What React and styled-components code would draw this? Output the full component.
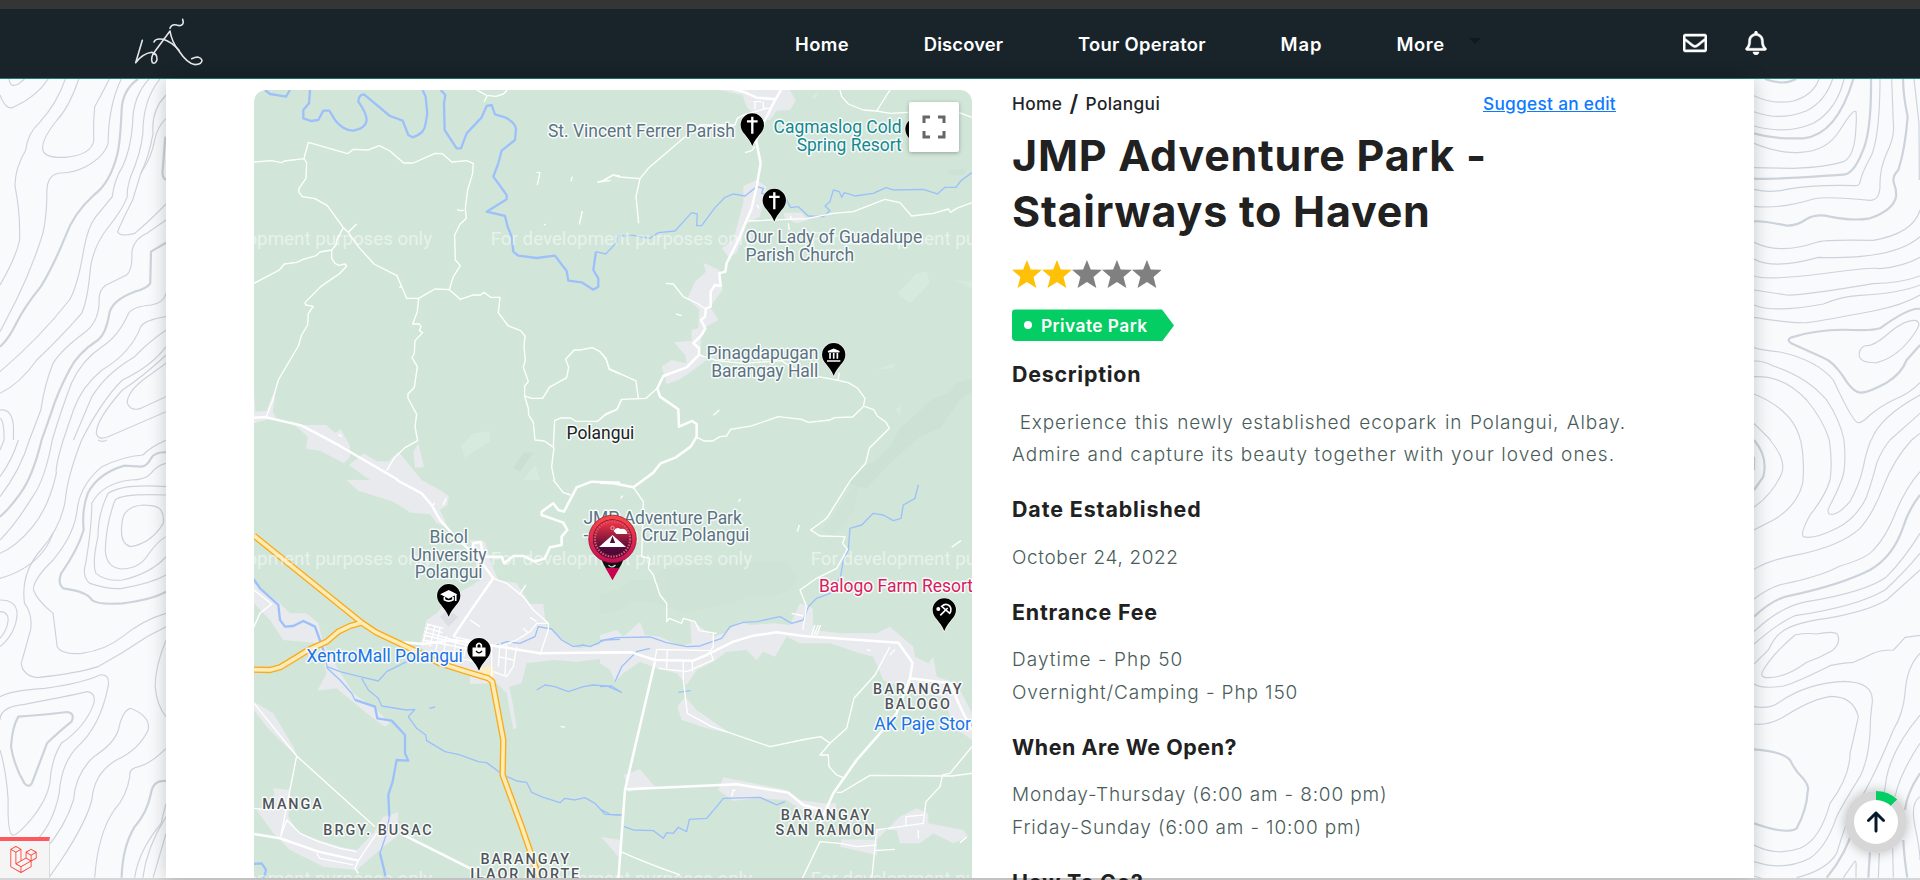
import React from 'react';
import styled, { createGlobalStyle } from 'styled-components';
import { FaRegEnvelope, FaRegBell } from 'react-icons/fa';
import { FaArrowUp } from 'react-icons/fa6';
import { SiLaravel } from 'react-icons/si';

const GlobalStyle = createGlobalStyle`
  * { box-sizing: border-box; }
  body { margin: 0; overflow: hidden; font-family: Inter, "Liberation Sans", sans-serif; }
  h1, h2, p { margin: 0; }
`;

const Page = styled.div`
  display: flex;
  flex-direction: column;
  height: 880px;
  overflow: hidden;
  background: #f9fafc;
`;

const TopStrip = styled.div`
  height: 9px;
  flex: none;
  background: #353535;
`;

const Header = styled.header`
  display: flex;
  align-items: center;
  height: 70px;
  flex: none;
  padding-left: 130px;
  background: #18242a;
  border-bottom: 1px solid #1c7f79;
`;

const Logo = styled.svg`
  width: 76px;
  height: 60px;
  margin-top: -3px;
  fill: none;
  stroke: #e4e6e7;
  stroke-width: 4.8;
  stroke-linecap: round;
  stroke-linejoin: round;
`;

const Nav = styled.nav`
  display: flex;
  gap: 75px;
  margin-left: 589px;
`;

const NavLink = styled.a`
  color: #fff;
  font-size: 18.4px;
  font-weight: 600;
  line-height: 26px;
  letter-spacing: ${(p) => p.$track}px;
  margin-right: -${(p) => p.$track}px;
  white-space: nowrap;
`;

const Caret = styled.span`
  width: 0;
  height: 0;
  margin: -5px 0 0 25px;
  border: 6px solid transparent;
  border-top-color: #10181b;
  border-bottom: 0;
`;

const HeaderIcons = styled.div`
  display: flex;
  align-items: center;
  gap: 37px;
  margin: -2px 0 0 auto;
  padding-right: 152px;
  color: #fff;
  path { stroke: #fff; stroke-width: 10; }
`;

const Main = styled.main`
  display: grid;
  grid-template-columns: 166px 1588px 166px;
  height: 799px;
  flex: none;
`;

const Contours = styled.svg`
  width: 166px;
  height: 799px;
  fill: none;
  stroke: #ccd3db;
  stroke-width: 1.15;
  path { vector-effect: non-scaling-stroke; }
  .index { stroke-width: 2.2; }
`;

const Panel = styled.section`
  position: relative;
  z-index: 1;
  display: flex;
  gap: 40px;
  height: 799px;
  padding: 11px 0 0 88px;
  background: #fff;
  box-shadow: 0 0 18px rgba(0, 0, 0, 0.2);
`;

const MapFrame = styled.div`
  position: relative;
  width: 718px;
  height: 788px;
  flex: none;
  overflow: hidden;
  border-radius: 12px 12px 0 0;
  background: #d1e6d9;
`;

const MapArt = styled.svg`
  display: block;
  width: 718px;
  height: 788px;
  .road { fill: none; stroke: #fff; stroke-width: 4; stroke-linejoin: round; }
  .main { fill: none; stroke: #fff; stroke-width: 7.5; stroke-linejoin: round; }
  .river { fill: none; stroke: #9dc0fa; stroke-width: 4; stroke-linejoin: round; }
  .wide { stroke-width: 7; }
  .urban { fill: #e8eaed; }
  .shade { fill: #cbe0d2; }
  .light { fill: #d6ebde; }
  .edge { fill: none; stroke: #f9ab1a; stroke-width: 19; stroke-linejoin: round; }
  .core { fill: none; stroke: #ffebb5; stroke-width: 11; stroke-linejoin: round; }
`;

const MapLabel = styled.text`
  font-family: Roboto, sans-serif;
  font-size: ${(p) => (p.$area ? 14.4 : 17.45)}px;
  font-weight: ${(p) => (p.$area ? 500 : 400)};
  letter-spacing: ${(p) => (p.$area ? 1.95 : 0)}px;
  fill: ${(p) => p.$color || '#5b7383'};
  stroke: rgba(255, 255, 255, 0.85);
  stroke-width: 3px;
  stroke-linejoin: round;
  paint-order: stroke;
`;

const Watermark = styled.text`
  font-family: Roboto, sans-serif;
  font-size: 18.75px;
  fill: rgba(255, 255, 255, 0.5);
`;

const FullscreenButton = styled.button`
  position: absolute;
  top: 12px;
  right: 13px;
  display: grid;
  place-items: center;
  width: 50px;
  height: 50px;
  padding: 0;
  border: 0;
  border-radius: 2px;
  background: #fff;
  box-shadow: 0 1px 4px rgba(0, 0, 0, 0.3);
`;

const Details = styled.article`
  width: 614px;
  padding-top: 2px;
`;

const CrumbRow = styled.div`
  display: flex;
  align-items: center;
  width: 604px;
  height: 24px;
  margin-bottom: 11.3px;
  color: #212529;
  font-size: 17.3px;
  font-weight: 500;
  line-height: 24px;
  letter-spacing: 0.4px;
`;

const Slash = styled.span`
  margin: 0 6.8px 0 7.2px;
  font-size: 23px;
  font-weight: 600;
`;

const SuggestLink = styled.a`
  margin-left: auto;
  color: #0d7bff;
  text-decoration: underline;
  letter-spacing: 0.28px;
`;

const Title = styled.h1`
  color: #212121;
  font-size: 43px;
  font-weight: 700;
  line-height: 56px;
  letter-spacing: 0.75px;
  white-space: nowrap;
`;

const Stars = styled.div`
  display: flex;
  margin: 21.2px 0 21px;
`;

const Star = styled.svg`
  width: 29.9px;
  height: 28px;
  fill: ${(p) => (p.$on ? '#ffc107' : '#808080')};
`;

const Badge = styled.span`
  display: flex;
  align-items: center;
  gap: 9px;
  width: 162px;
  height: 32px;
  padding-left: 12px;
  border-radius: 4px 0 0 4px;
  background: #04cd63;
  color: #fff;
  font-size: 17.3px;
  font-weight: 600;
  letter-spacing: 0.46px;
  white-space: nowrap;
  clip-path: polygon(0 0, 150px 0, 100% 50%, 150px 100%, 0 100%);
  &::before {
    content: '';
    width: 8px;
    height: 8px;
    border-radius: 50%;
    background: #fff;
  }
`;

const Sections = styled.div`
  display: flex;
  flex-direction: column;
  gap: 23.6px;
  margin-top: 18.7px;
`;

const Heading = styled.h2`
  margin-bottom: 18.6px;
  color: #212121;
  font-size: 21.4px;
  font-weight: 650;
  line-height: 28px;
  letter-spacing: ${(p) => p.$track}px;
  white-space: nowrap;
`;

const Line = styled.p`
  color: #495c5a;
  font-size: 19px;
  font-weight: 300;
  line-height: 32.4px;
  letter-spacing: ${(p) => p.$track}px;
  white-space: nowrap;
  ${(p) => p.$justify && 'text-align: justify; text-align-last: justify; white-space: normal;'}
`;

const BottomEdge = styled.div`
  height: 2px;
  flex: none;
  background: #d6d6d6;
`;

const DebugBar = styled.div`
  position: fixed;
  left: 0;
  top: 837px;
  z-index: 2;
  display: grid;
  place-items: center;
  width: 50px;
  height: 41px;
  padding-right: 2px;
  border-top: 4px solid #ff5960;
  border-right: 1px solid #dcdcdc;
  background: #f5f5f5;
  color: #ff3b30;
`;

const ScrollTop = styled.button`
  position: fixed;
  left: 1845px;
  top: 791px;
  z-index: 2;
  display: grid;
  place-items: center;
  width: 62px;
  height: 62px;
  padding: 0;
  border: 0;
  border-radius: 50%;
  background: conic-gradient(#04cd63 0 12%, #d6d6d6 12% 100%);
  box-shadow: 0 0 12px rgba(0, 0, 0, 0.25);
`;

const ScrollDisc = styled.span`
  display: grid;
  place-items: center;
  width: 44px;
  height: 44px;
  border-radius: 50%;
  background: #fff;
  color: #061a2b;
`;

const leftTop = [
  'M22,237 Q25,265 45,252 L60,237',
  'M0,285 Q15,335 35,320 Q90,290 118,237',
  'M160,237 Q140,310 95,370 Q68,400 63,450 Q35,510 37,560 Q50,640 48,720 Q40,770 0,855',
  'M193,237 Q170,320 140,360 Q100,420 105,450 Q110,475 160,472 Q225,465 230,420 Q228,370 232,320 Q250,280 268,237',
  'M297,237 Q265,320 265,430 Q255,470 210,500 Q180,518 150,519 Q117,520 115,570 Q115,650 105,700 Q80,800 40,900 L0,995',
  'M365,237 Q325,290 325,370 Q320,450 300,500 Q280,540 275,590 L235,650 Q215,680 205,750 Q190,860 170,900 Q100,1010 0,1115',
  'M392,237 Q350,300 350,400 Q345,460 320,530 Q310,570 312,590 Q300,630 260,690 Q230,740 222,800 Q215,900 200,940 Q150,1010 90,1080 Q50,1150 0,1180',
  'M407,285 Q370,330 375,400 Q365,470 345,520 Q335,560 325,600 Q300,660 288,695 Q295,712 330,700 Q360,670 407,612',
  'M407,355 Q385,380 378,425 Q372,470 345,520',
  'M407,660 L360,700 Q325,720 323,760 Q325,810 310,825 L260,855 Q240,870 243,910 Q240,970 205,1000 Q150,1050 130,1090 Q110,1150 100,1230 L72,1320',
  'M407,880 Q400,910 370,915 Q325,920 315,940 Q290,1010 250,1040 Q200,1080 175,1150 Q150,1230 128,1320',
  'M407,950 Q355,960 345,980 Q320,1060 250,1110 Q200,1160 180,1230 L155,1320',
  'M407,990 Q360,1030 330,1070 Q260,1120 225,1190 L180,1320',
  'M407,1040 Q370,1100 300,1140 Q250,1200 200,1320',
  'M407,1090 L350,1140 Q310,1180 312,1210 Q320,1235 345,1225 L407,1190',
  'M407,1065 Q350,1130 300,1170 Q235,1260 236,1300 Q240,1322 265,1310 L407,1235',
  'M0,1230 Q30,1225 33,1280 L33,1320 M0,1255 Q10,1260 10,1320',
];
const leftTopIndex = [
  'M338,237 Q300,270 298,330 Q295,420 288,460 Q270,550 230,585 Q180,640 160,710 Q130,800 100,860 Q60,920 40,970 Q20,1020 0,1040',
  'M407,728 L370,755 L368,850 Q360,865 330,875 Q275,900 268,940 Q260,1000 240,1020 Q190,1060 170,1110 Q140,1180 125,1240 L102,1320',
  'M405,410 L398,520 Q400,538 407,538',
];
const leftBottom = [
  'M128,0 Q110,120 80,170 Q40,250 0,300',
  'M72,0 Q50,90 0,170',
  'M45,0 Q30,60 0,110',
  'M10,0 L0,30',
  'M155,0 Q135,80 138,100 Q120,200 80,260 Q40,320 0,340',
  'M200,0 Q165,110 160,180 Q150,260 100,330 Q50,400 60,490 Q80,520 75,570 L52,670 Q55,705 90,713 Q190,700 240,680 Q300,640 360,590 L407,560',
  'M130,280 Q100,380 0,415',
  'M407,0 Q370,20 350,45 Q300,50 250,80 Q200,130 190,200 Q185,280 130,360 Q80,420 82,450 Q90,480 130,520 Q135,570 140,620 Q150,645 200,640 Q260,630 300,590 Q350,540 407,520',
  'M407,70 Q385,75 370,100 Q355,120 320,120 Q250,130 225,190 Q225,260 210,370 Q200,410 220,430 Q270,450 300,445 Q370,430 407,405',
  'M407,140 Q300,130 265,160 Q240,220 240,290 Q225,370 235,400 Q260,425 300,420 Q370,400 407,350',
  'M407,165 Q300,160 282,180 Q260,250 258,330 Q260,385 300,387 Q345,385 365,340 Q390,300 407,290',
  'M350,195 Q305,200 300,240 Q290,310 320,320 Q370,310 400,250 Q405,200 370,197 Z',
  'M240,0 Q250,8 262,0',
  'M0,480 Q40,480 42,520 Q40,580 0,620 M0,515 Q20,515 20,540 Q18,570 0,595',
  'M0,770 Q30,750 110,745 Q200,730 245,705 Q270,700 265,740 Q245,860 190,920 Q150,970 145,1060 Q130,1150 90,1200 L60,1230',
  'M0,840 Q0,800 60,793 Q160,770 215,755 Q235,760 230,790 Q210,860 150,910 Q125,960 122,1030 Q115,1080 75,1140 Q40,1190 30,1185 Q18,1175 20,1080 Q15,990 0,930',
  'M320,805 Q370,830 363,870 Q340,930 285,960 Q230,1000 225,1080 Q210,1150 150,1260 L120,1313',
  'M320,805 Q300,810 290,870 Q280,910 230,950 Q185,1000 180,1080 Q160,1160 110,1230 L80,1260',
  'M407,600 Q380,680 380,740 Q385,800 407,830',
  'M407,925 Q370,970 340,980 Q315,985 318,1010 Q310,1070 280,1110 Q240,1180 232,1313',
  'M407,1090 Q400,1120 395,1150 Q340,1230 330,1313',
  'M407,1130 Q360,1220 350,1313',
  'M407,1180 L375,1313',
];
const leftBottomIndex = [
  'M102,0 Q80,110 50,160 Q20,210 0,230',
  'M407,37 Q380,35 370,55 Q360,80 345,80 L305,77 Q240,100 215,160 Q200,210 205,270 Q190,330 150,400 Q140,430 155,445 Q215,455 225,480 Q240,495 300,490 Q370,480 407,455',
  'M45,830 Q30,860 27,920 Q35,980 60,1030 Q70,1045 78,1030 Q100,960 115,910 Q140,880 175,845 Q185,820 165,816 Q100,825 45,830 Z',
  'M407,1023 Q375,1020 370,1060 Q360,1120 330,1160 Q300,1220 298,1313',
];
const rightTop = [
  'M342,287 Q400,315 460,303 Q520,285 537,237',
  'M342,335 Q420,365 500,332 Q555,305 578,237',
  'M342,378 Q440,405 520,370 Q590,330 612,237',
  'M342,430 Q420,462 480,457 Q560,455 600,390 Q640,325 648,335 Q650,350 648,380 Q645,470 610,485 Q560,502 460,505 L342,503',
  'M342,568 Q390,580 440,568 Q520,553 650,557 Q658,558 662,540 Q665,520 695,465 Q720,400 720,237',
  'M342,619 Q420,628 520,597 Q560,588 690,601 Q718,600 720,560 Q718,510 740,460 Q765,410 760,370 L755,237',
  'M822,237 L837,370 L838,540',
  'M342,727 Q420,765 530,727 Q550,718 700,721 Q820,700 840,630',
  'M342,777 Q400,810 535,772 Q760,780 840,710',
  'M342,828 Q380,842 540,822 Q700,800 720,806 Q790,800 840,772',
  'M342,870 L440,885 Q480,888 700,851 Q780,850 840,828',
  'M342,915 Q400,940 550,912 Q600,890 660,886 Q780,880 840,855',
  'M342,952 Q450,970 500,968 Q560,960 700,933 Q790,915 840,885',
  'M825,961 Q790,960 740,1005 Q700,1040 675,1037 Q655,1045 658,1070 Q665,1090 710,1088 Q780,1070 830,990 Q845,965 825,961 Z',
  'M342,1043 Q370,1052 420,1056 Q530,1080 580,1140 Q640,1270 655,1268 Q665,1270 690,1245 Q720,1220 760,1200 Q810,1180 840,1148',
  'M342,1083 Q370,1082 400,1098 Q500,1130 560,1200 Q600,1260 612,1320',
  'M342,1130 Q430,1125 500,1200 Q550,1260 568,1320',
  'M342,1182 Q460,1230 481,1320',
  'M342,1270 L392,1320',
  'M694,1320 Q720,1250 840,1185',
  'M750,1320 L840,1240',
  'M815,1320 L840,1300',
];
const rightTopIndex = [
  'M375,237 Q430,258 468,237',
  'M342,400 Q400,418 490,415 Q590,405 640,237',
  'M342,536 Q380,540 610,524 Q640,522 665,460 Q695,400 693,237',
  'M342,664 Q370,662 440,677 Q470,678 500,657 Q530,640 570,650 Q640,664 690,655 Q760,630 768,590 Q770,570 762,550 Q755,530 775,510 Q795,450 803,350 Q790,290 789,237',
  'M840,927 Q810,920 720,985 Q700,992 640,990 Q540,985 455,1012 Q435,1020 460,1033 L550,1073 Q580,1085 610,1130 Q640,1180 665,1178 Q690,1175 740,1148 Q785,1120 800,1080 L840,1035',
];
const rightBottom = [
  'M390,0 Q440,60 425,100 Q400,160 342,202',
  'M482,0 Q495,60 488,130 Q470,200 400,240 L342,270',
  'M568,0 Q578,70 570,120 Q555,170 510,225 Q480,280 490,290 Q520,300 590,265 Q650,235 680,170 Q700,110 710,70 Q725,30 750,0',
  'M612,0 Q620,80 605,120 Q590,160 568,200 Q560,215 568,222 Q590,230 630,185 Q660,130 670,80 Q680,30 693,0',
  'M342,388 Q390,360 460,347 Q600,320 660,265 Q700,220 730,140 Q760,60 815,0',
  'M342,477 Q390,440 430,432 Q540,410 600,378 Q680,355 700,330 Q740,290 770,210 Q800,140 840,95',
  'M342,575 Q420,500 500,485 Q680,455 740,410 Q790,360 840,280',
  'M342,612 Q420,545 465,527 Q650,500 735,450 Q790,400 840,340',
  'M342,672 L385,630 Q405,590 420,580 Q450,550 560,535 Q680,515 740,480 L840,390',
  'M465,585 Q500,578 530,582 Q580,572 592,582 Q605,610 575,633 Q540,653 500,667 Q440,712 385,713 Q355,712 370,690 Q400,640 465,585 Z',
  'M342,732 Q370,748 430,738 Q470,727 570,677 Q600,670 640,667 Q670,655 700,640 Q720,630 760,630 Q780,610 795,592 L840,586',
  'M342,800 Q390,808 420,785 Q500,730 610,724 Q700,725 697,785 Q690,830 690,880 Q685,960 660,1010 Q610,1090 590,1130 Q560,1220 510,1255 Q430,1295 342,1265',
  'M342,852 Q390,858 440,825 Q520,775 575,769 Q640,770 655,830 Q640,900 630,940 Q630,1010 570,1090 Q540,1200 480,1225 Q410,1250 342,1215',
  'M342,1308 L380,1320 M470,1313 Q560,1290 590,1240 Q620,1140 640,1110 Q690,1040 760,870 Q790,820 795,760 Q800,680 840,640',
  'M610,1313 L645,1263 Q650,1263 648,1290 L648,1313',
  'M840,825 Q760,920 740,1010 L725,1110',
  'M840,910 Q780,1000 765,1070',
  'M840,1070 Q810,1090 825,1160 Q840,1230 840,1260',
  'M718,1238 L715,1313 M758,1225 L760,1313',
];
const rightBottomIndex = [
  'M342,0 Q385,50 370,110 L342,150 M342,50 L342,90',
  'M342,530 Q400,475 450,467 Q600,435 690,390 Q760,350 790,260 Q805,210 840,165',
  'M342,928 Q430,935 450,960 Q465,990 480,1005 Q510,1035 503,1055 Q500,1110 470,1165 Q440,1185 342,1150',
  'M560,1313 Q620,1240 640,1160',
  'M840,1000 Q800,1060 795,1110 M790,1200 Q792,1250 802,1313',
  'M690,1235 L685,1313',
];

function ContourSet({ transform, lines, index }) {
  return (
    <g transform={transform}>
      {lines.map((d) => <path key={d} d={d} />)}
      {index.map((d) => <path key={d} className="index" d={d} />)}
    </g>
  );
}

function Pin({ x, y, children }) {
  return (
    <g transform={`translate(${x} ${y}) scale(.3333)`}>
      <path
        d="M0,-35 A35,35 0 0 1 35,0 C35,24 12,32 0,63 C-12,32 -35,24 -35,0 A35,35 0 0 1 0,-35 Z"
        fill="#000" stroke="#fff" strokeOpacity=".7" strokeWidth="4" paintOrder="stroke"
      />
      <g fill="none" stroke="#fff" strokeWidth="5">{children}</g>
    </g>
  );
}

const mainHighway = 'M42,167 L365,428 L410,458 L520,510 L600,550 L680,575 L745,595 L757,605 L775,700 L790,780 L788,885 L845,1040 L900,1200';
const westHighway = 'M42,569 L90,570 L120,562 L160,538 L205,510 L260,485 L295,455 L330,438 L365,428';

const T = 'scale(.3333)';

function ParkMap() {
  return (
    <MapArt viewBox="254 90 718 788">
      {/* areas */}
      <g transform={`translate(240 80) ${T}`}>
        <path className="light" d="M662,1098 L700,1060 L750,1053 L750,1083 L675,1133 Z M850,1200 L885,1155 L900,1200 Z" />
        <path className="shade" d="M820,1165 L850,1118 L880,1118 L840,1175 Z" />
        <path className="urban" d="M42,930 L46,995 L78,993 L98,945 L106,950 L98,995 L108,1012 L42,1030 Z M150,1022 L190,1035 L258,1035 L285,1058 L303,1048 L330,1098 L330,1130 L312,1150 L240,1112 L198,1106 L203,1070 Z M327,1155 L370,1120 L410,1143 L445,1145 L475,1115 L545,1200 L390,1200 Z M520,1115 L535,1090 L552,1160 L525,1163 Z" />
      </g>
      <g transform={`translate(600 80) ${T}`}>
        <path className="shade" opacity=".75" d="M1116,895 L1070,910 L1045,940 L1000,955 L940,1010 L900,1045 L870,1100 L830,1140 L770,1170 L740,1210 L800,1225 L870,1150 L960,1070 L1020,1045 L1080,960 L1116,935 Z M1040,270 L1100,268 L1090,285 L1050,285 Z" />
        <path className="light" d="M892,640 L950,580 L980,575 L990,610 L930,670 Z M1065,600 L1116,605 L1116,625 Z M885,990 L902,975 L902,1005 Z M635,50 L660,30 L645,60 Z M830,870 L885,848 L880,865 Z" />
        <path className="urban" d="M358,30 L570,30 L587,62 L570,90 L530,92 L510,120 L470,110 L440,80 L428,45 Z M430,318 L470,300 L500,320 L480,410 L440,430 L410,520 L385,530 L365,505 L400,480 L430,370 Z M310,548 L358,570 L368,630 L330,680 L355,720 L318,740 L305,765 L300,820 L320,840 L260,885 L235,900 L200,912 L185,860 L215,840 L260,850 L255,825 L222,787 L275,782 L275,750 L295,745 L298,690 L262,655 L285,605 L318,575 Z M550,398 L605,398 L625,420 L590,430 L555,415 Z" />
      </g>
      <g transform={`translate(240 480) ${T}`}>
        <path className="urban" d="M320,0 L545,0 L600,30 L627,48 L622,75 L600,90 L625,145 L590,130 L570,102 L512,98 L460,65 L355,32 Z M690,180 L735,185 L750,240 L775,300 L830,310 L870,372 L910,372 L918,435 L970,480 L1015,505 L1140,485 L1140,590 L1095,535 L1010,545 L940,540 L860,550 L845,610 L808,620 L820,680 L830,745 L820,748 L800,640 L770,610 L690,612 L690,590 L600,550 L540,500 L560,420 L590,400 L630,350 L690,320 L720,300 Z M42,310 L120,370 L150,400 L200,400 L235,430 L250,490 L290,560 L340,640 L410,690 L450,730 L435,740 L380,700 L290,625 L232,632 L260,580 L235,490 L130,480 L90,420 L42,370 Z M42,665 L100,700 L160,800 L172,828 L140,800 L80,740 L42,690 Z M100,925 L150,930 L145,1010 L175,1060 L300,1100 L350,1110 L400,1060 L430,1010 L475,997 L470,1070 L430,1100 L350,1170 L250,1160 L150,1110 L100,1060 L50,990 L110,985 Z M1085,1072 L1140,1080 L1140,1135 Z" />
        <path fill="#dcdee3" d="M600,410 L625,390 L655,410 L625,440 Z" />
        <path fill="#fdeec4" d="M720,565 L758,555 L762,590 L720,580 Z" />
      </g>
      <g transform={`translate(600 480) ${T}`}>
        <path className="shade" d="M0,345 L60,325 L90,300 L150,300 L190,260 L260,262 L330,240 L400,250 L560,245 L590,290 L570,330 L520,345 L440,350 L400,370 L330,380 L250,400 L180,370 L100,365 L60,390 L0,400 Z M730,60 L780,0 L760,90 L700,170 L670,150 Z" opacity=".45" />
        <path className="urban" d="M0,465 L50,450 L70,470 L120,425 L135,465 L180,470 L240,498 L275,490 L270,420 L300,440 L345,470 L380,455 L420,425 L450,435 L520,430 L570,435 L600,370 L638,385 L640,450 L720,460 L830,460 L870,440 L940,500 L945,530 L985,550 L1000,530 L1010,590 L1070,610 L1116,700 L1116,780 L1060,740 L1030,650 L960,640 L850,600 L820,530 L780,520 L690,490 L600,490 L560,470 L525,530 L490,515 L470,540 L440,510 L380,515 L340,545 L290,570 L260,615 L230,580 L170,565 L120,545 L70,580 L45,605 L30,570 L0,550 Z M232,680 L255,650 L290,690 L390,760 L320,745 L245,720 Z M72,885 L120,868 L165,920 L85,935 Z M370,892 L560,930 L600,960 L670,970 L710,970 L700,1010 L620,1000 L560,960 L470,955 L400,962 L355,930 Z M900,1010 L950,985 L985,1000 L985,1030 L1090,1050 L1105,1070 L1060,1090 L1000,1060 L960,1090 L900,1090 L890,1050 L830,1050 L830,1125 L720,1100 L725,1078 L830,1080 Z M5,1072 L60,1080 L60,1135 Z" />
      </g>

      {/* water */}
      <g transform={`translate(240 80) ${T}`}>
        <path className="river wide" d="M75,30 L90,42 L115,46 L138,50 L150,30 M210,30 L207,70 L190,90 L190,115 L213,123 L235,120 L250,92 L268,92 L285,120 Q310,152 340,152 Q378,145 380,120 Q380,100 355,65 Q355,45 372,43 L450,108 L488,122 L505,165 L518,172 Q555,160 557,130 L562,100 L557,50 L548,30 M602,30 L616,45 L612,70 L614,150 L650,205 L663,205 L680,160 L725,112 L740,78 L755,75 L765,103 L795,112 Q830,130 828,150 L825,180 L785,212 L775,250 L760,290 L800,345 L800,358 L740,395 L795,408 L803,440 L815,470 L820,515 L835,527 L890,534 L945,527 L980,573 L985,602 L1025,607 L1060,629 L1075,620 L1075,595 L1060,570 L1068,515" />
        <path className="river" d="M1068,515 L1097,522 L1130,488 L1132,468 L1180,466" />
      </g>
      <g transform={`translate(600 80) ${T}`}>
        <path className="river" d="M100,466 L150,475 L175,458 L225,453 L275,398 L292,402 L290,437 L305,437 L345,383 L375,352 L400,342 L435,348 L470,320 L490,325 L485,340 L500,345 L560,360 L572,383 L595,380 L625,408 L670,410 L690,392 L675,378 L690,365 L700,330 L718,335 L725,352 L733,338 L765,348 L820,340 L858,323 L880,330 L970,328 L1012,342 L1035,322 L1068,322 L1082,303 L1116,278" />
      </g>
      <g transform={`translate(240 480) ${T}`}>
        <path className="river wide" d="M42,298 L60,325 L115,375 L120,420 L135,440 L160,438 L190,423 L225,440 L245,495 L255,525 M345,660 L405,680 L412,715 L455,722 L495,765 L495,820 L505,842 L470,840 L458,905 L445,945 L448,1010 M420,1120 L430,1160 L438,1195 M42,1152 L65,1150 L78,1170 L72,1195" />
        <path className="river" d="M255,525 L262,565 L300,600 L335,640 L345,660 M448,1010 L440,1060 L420,1120 M262,560 L300,575 L360,590 L415,603 L440,575 L500,545 M365,595 L385,630 L415,655 L425,678 L500,690 L525,688 L505,710 L530,745 L557,765 L560,782 L615,815 L660,825 L715,845 L740,848 L790,885 L830,903 L860,907 L875,937 L910,952 L960,968 L975,955 L1005,960 L1035,953 L1065,970 L1095,1003 L1140,1005 M568,685 L585,681 M760,500 L800,485 L840,490 L885,470 L895,440 L935,447 L965,480 L1000,500 L1030,495 L1050,500 L1095,480 L1140,478 M890,630 L915,615 L945,620 L985,635 L1030,620 L1060,615 L1100,618 L1140,635" />
      </g>
      <g transform={`translate(600 480) ${T}`}>
        <path className="river" d="M0,482 L50,473 L150,471 L200,488 L260,500 L300,498 L365,475 L390,440 L430,427 L470,425 L540,410 L575,430 L610,420 L625,380 L650,355 L690,340 L722,290 L730,240 L745,210 L750,145 L785,135 L820,100 L850,105 L880,122 L903,115 L910,75 L945,55 L955,15 M0,987 L30,1003 L65,1005 M72,1040 L100,1050 L160,1052 L190,1075 L200,1058 L220,1060 L235,1042 L260,1055 L268,1018 L320,1015 L350,980 L370,955 L480,952 L530,975 L555,965 M45,605 L65,560 L110,515 L150,505 M0,620 L35,618 L65,638 M235,637 L272,632" />
      </g>

      {/* roads */}
      <g transform={`translate(240 80) ${T}`}>
        <path className="road" d="M42,246 L95,242 L125,248 L133,243 L192,236 L205,187 L323,221 L340,208 L385,210 L418,197 L450,213 L491,249 L520,249 L585,220 L607,221 L636,246 L680,242 L700,250 L698,280 L683,330 L676,385 L679,415 L660,433 L644,465 L646,540 L661,557 L640,590 L628,629 M192,236 L200,248 L198,295 L177,325 L176,335 L187,350 L225,356 L262,377 L310,443 L325,457 L355,500 L402,552 L471,587 L500,655 L536,655 L585,627 L628,629 L661,658 L700,645 L722,645 L732,637 L752,652 L780,652 L775,698 L805,738 L842,752 L855,768 L852,800 L856,840 L850,862 L865,905 L854,918 L854,948 L865,985 L866,1005 L880,1027 L885,1080 L913,1083 L942,1103 L935,1160 L943,1200 M350,432 L325,457 M310,443 L290,480 L288,495 L275,510 L240,516 L228,527 L190,538 L170,547 L133,552 L118,570 L42,610 M275,510 L275,535 L285,550 L297,556 L315,552 L320,558 L300,580 L242,620 L195,668 L197,675 L220,679 L205,700 L203,735 L185,765 L175,798 L115,900 L98,960 L80,1008" />
        <path className="road" d="M536,655 L532,695 L518,732 L538,732 L543,740 L538,752 L548,758 L525,782 L523,820 L516,832 L532,860 L523,922 L504,942 L504,955 L530,1003 L525,1040 L533,1082 L495,1103 L462,1135 L440,1172 M854,948 L875,955 L908,955 L928,922 L980,893 L986,862 L977,838 L1003,810 L1020,810 L1057,803 L1080,815 L1098,835 L1108,868 L1140,882 M940,1103 L944,1022 L963,1014 L992,1014 L1008,1024 L1073,1024 L1092,1007 L1132,988 L1145,958 M710,30 L740,46 L768,49 L790,42 L802,30 M742,46 L733,65 M652,388 L660,392 L672,391 M890,277 L900,278 L892,315 M997,290 L993,304 M1027,393 L1018,433 M1072,306 L1112,301 M1092,300 L1118,285 L1140,288 M912,436 L917,432 M478,623 L485,617 M295,1063 L305,1070" />
        <path className="main" d="M42,1013 L75,1011 L185,1037 L230,1060 L300,1098 L475,1200" />
      </g>
      <g transform={`translate(600 80) ${T}`}>
        <path className="main" d="M400,27 L435,37 L470,53 L528,58 M543,30 L520,70 L495,120 L468,180 L482,250 L470,320 L455,385 L415,480 L380,550 L376,575 L358,580 L362,618 L345,615 L332,635 L332,680 L318,685 L315,710 L303,720 L316,745 L305,765 L280,790 L297,805 L297,825 L260,862 L190,888 L172,925 L180,950 L235,988 L237,1040 L277,1023 L290,1032 L290,1070 L272,1100 L228,1132 L182,1150 L160,1178 L130,1200" />
        <path className="road" d="M720,30 L725,50 L745,72 L790,90 L830,93 L870,30 M830,93 L870,100 L925,97 M1078,98 L1116,112 M250,175 L145,265 L120,296 L108,350 L116,430 M120,296 L60,291 L40,285 L15,300 L0,305 M250,175 L300,135 L405,135 L412,115 L430,105 L500,85 M0,815 L18,838 L28,867 L108,903 L115,955 M0,1018 L20,1000 L50,988 L65,958 L138,955 L172,925 M198,610 L220,612 L250,650 L295,672 L318,688 M297,825 L350,842 L430,850 L545,842 L600,880 L700,898 L745,908 L772,924 L795,955 L790,980 L758,1011 L705,1013 L690,1020 L625,1027 L605,1018 L535,1010 L455,1038 L392,1048 L380,1068 L360,1070 L338,1083 L312,1083 L290,1072 M714,900 L718,878 M790,978 L822,990 L832,1008 L858,1027 L868,1045 L808,1105 L797,1150 L752,1200 M445,423 L620,416 L700,400 L760,395 L855,358 L900,368 L935,408 L1000,400 L1045,387 L1052,397 L1070,385 L1116,368 M565,430 L568,450 M228,702 L245,707 M340,1006 L358,990 M435,218 L455,212 L465,200 M460,65 L485,65 M465,65 L465,88 M490,65 L490,85 L510,85 M470,375 L478,385 M572,408 L572,420" />
      </g>
      <g transform={`translate(240 480) ${T}`}>
        <path className="road" d="M760,295 L800,310 L850,350 L880,390 L925,430 L925,450 L900,525 M940,0 L970,38 L992,45 M858,315 L838,345 M640,470 L780,500 L830,480 L870,455 L890,430 L925,430 M755,500 L755,600 M42,670 L170,828 L405,1040 M170,828 L122,1070 M42,440 L60,400 L95,372 L42,330 M355,1142 L410,1060 M355,1142 L345,1165 L355,1180 M122,1070 L140,1020 L180,1060 L235,1085 L300,1105 L350,1115 M230,1120 L240,1135 L340,1155 M560,432 L610,445 M555,443 L608,458 M552,455 L640,480 M550,465 L690,498 M548,480 L700,510 M565,432 L548,490 M585,438 L570,500 M600,442 L588,510 M620,468 L610,520 M650,475 L640,530 M680,480 L672,530 M740,490 L740,540 M780,490 L775,560 M830,500 L820,560 L800,590 L760,575 M775,530 L820,540 M800,495 L795,585 M690,420 L720,440 M640,530 L700,545 M870,412 L890,425 M850,445 L865,460 M42,985 L70,988 L125,985 M962,739 L975,742 M580,75 L583,68 M610,75 L618,55" />
        <path className="main" d="M470,0 L545,40 L575,75 L600,120 L650,175 L700,220 L735,260 L760,295 L690,395 L640,470 M700,210 L700,190 L722,185 L730,230 L785,230 L793,250 L820,228 L850,228 L885,245 L915,235 L930,202 L965,195 L965,170 L982,150 L970,128 L905,105 L905,95 L940,70 L955,90 L972,95 L1010,22 L1055,5 L1140,8 M465,485 L550,492 L640,480 L780,500 L900,520 L1140,517 M42,1062 L120,1075 L235,1115 L355,1142 M490,1065 L640,1140 L720,1180" />
        <path className="edge" d={westHighway} />
        <path className="edge" d={mainHighway} />
        <path className="core" d={westHighway} />
        <path className="core" d={mainHighway} />
      </g>
      <g transform={`translate(600 480) ${T}`}>
        <path className="main" d="M0,518 L95,517 L165,540 L280,542 L320,525 L400,485 L460,467 L530,457 L610,468 L895,488 L938,548 L930,595 L1050,610 L1085,690 L1116,750 M165,545 L75,930 L55,1200 M930,595 L890,700 L840,760 L770,840 L700,940 L660,1030 M665,990 L610,975 L565,938 L410,913 L80,928 M0,8 L40,10 L100,22 L130,0" />
        <path className="road" d="M100,22 L130,65 L125,230 L150,235 L145,265 L160,285 L180,345 L200,370 L200,425 L208,415 L245,430 L250,415 L285,425 L298,452 L350,460 M340,460 L340,500 L330,515 M752,0 L680,115 L632,150 L660,168 L735,170 L728,190 L742,208 L710,265 L650,295 L600,330 L620,380 L608,450 M870,500 L825,585 L762,655 L740,745 L690,790 L660,825 L685,825 L687,860 L710,885 L730,893 M690,790 L662,770 L620,777 L510,800 L335,740 L262,700 L250,600 L250,545 M165,540 L170,508 L330,512 M175,565 L260,575 L340,540 L330,512 M202,510 L200,565 M277,545 L277,575 M710,937 L725,937 L810,886 L1055,888 L1116,880 M1116,800 L1050,880 L1028,885 L1020,920 L978,965 L970,1030 L830,1050 L815,1200 M970,1005 L918,1010 L918,1040 M605,1200 L660,1085 L720,1090 L770,1100 L830,1095 M822,1112 L885,1108 M955,1050 L955,1075 M1080,1088 L1100,1072 M62,1115 Q140,1150 240,1185 M635,465 L645,435 M642,465 L655,435 M650,465 L662,435 M575,400 L610,408 M1055,202 L1083,182 M598,135 L592,155 M415,65 L422,57 M62,55 L68,47 M395,950 L400,930 L407,932 M870,525 L885,508 M800,508 L812,512" />
      </g>

      {[245, 565.3, 885.3].map((y) =>
        [170.7, 490.7, 810.7].map((x) => (
          <Watermark key={`${x}-${y}`} x={x} y={y}>For development purposes only</Watermark>
        ))
      )}

      <MapLabel x="548" y="137.3">St. Vincent Ferrer Parish</MapLabel>
      <MapLabel x="901.7" y="133" textAnchor="end" $color="#12888f">Cagmaslog Cold</MapLabel>
      <MapLabel x="901.7" y="150.6" textAnchor="end" $color="#12888f">Spring Resort</MapLabel>
      <MapLabel x="745.5" y="243.3">Our Lady of Guadalupe</MapLabel>
      <MapLabel x="745.5" y="260.9">Parish Church</MapLabel>
      <MapLabel x="818.3" y="359.2" textAnchor="end">Pinagdapugan</MapLabel>
      <MapLabel x="818.3" y="376.7" textAnchor="end">Barangay Hall</MapLabel>
      <MapLabel x="566.5" y="439" $color="#202124">Polangui</MapLabel>
      <MapLabel x="448.7" y="543.4" textAnchor="middle">Bicol</MapLabel>
      <MapLabel x="448.7" y="561" textAnchor="middle">University</MapLabel>
      <MapLabel x="448.7" y="578.4" textAnchor="middle">Polangui</MapLabel>
      <MapLabel x="306.5" y="662.2" $color="#1a73e8">XentroMall Polangui</MapLabel>
      <MapLabel x="583.5" y="523.8">JMP Adventure Park</MapLabel>
      <MapLabel x="583.5" y="541.4">- Santa Cruz Polangui</MapLabel>
      <MapLabel x="819" y="592.4" $color="#d81b60">Balogo Farm Resort</MapLabel>
      <MapLabel x="874.3" y="730.2" $color="#1a73e8">AK Paje Store</MapLabel>
      {[
        [293, 808.6, 'MANGA'], [378.5, 834.6, 'BRGY. BUSAC'],
        [525.7, 864.3, 'BARANGAY'], [525.7, 879.3, 'ILAOR NORTE'],
        [918.3, 694, 'BARANGAY'], [918.3, 709, 'BALOGO'],
        [826, 820.3, 'BARANGAY'], [826, 835.3, 'SAN RAMON'],
      ].map(([x, y, name]) => (
        <MapLabel key={name + y} x={x} y={y} textAnchor="middle" $area $color="#50555b">{name}</MapLabel>
      ))}

      <Pin x={752.3} y={125}><path strokeWidth="7" d="M0,-25 V26 M-16,-11 H16" /></Pin>
      <Pin x={774.3} y={200.5}><path strokeWidth="7" d="M0,-25 V26 M-16,-11 H16" /></Pin>
      <Pin x={833.7} y={354.7}><path fill="#fff" d="M-17,-9 L0,-16 L17,-9 Z" /><path d="M-11,-5 V12 M0,-5 V12 M11,-5 V12 M-20,19 H20" /></Pin>
      <Pin x={917} y={129.3} />
      <Pin x={448.7} y={595.7}><path d="M-20,-4 L0,-14 L20,-4 L0,6 Z" fill="#fff" /><path d="M-13,4 V12 Q0,20 13,12 V4 M21,-4 V16" /></Pin>
      <Pin x={479} y={649.7}><path d="M-17,-4 H17 V18 H-17 Z" fill="#fff" /><path d="M-7,-6 V-14 Q0,-24 7,-14 V-6" /><path stroke="#000" strokeWidth="4" d="M-9,4 Q0,15 9,4" /></Pin>
      <Pin x={944.3} y={610}><circle cx="-18" cy="-3" r="3.5" fill="#fff" /><path d="M-12,16 L10,-6 M-8,-11 Q4,-22 16,-12 Q24,-2 16,10 Z" /></Pin>

      <g transform="translate(612.5 539)">
        <path d="M-11,20 C-9,28 -4,31 0,41 C4,31 9,28 11,20 Z" fill="#111" />
        <path d="M-7,29 L0,41 L7,29 Z" fill="#c9014f" />
        <path d="M-4,26 q3,4 7,0" fill="none" stroke="#ddd" strokeWidth="1.2" />
        <circle r="20" fill="url(#disc)" />
        <circle r="21.8" fill="none" stroke="url(#ring)" strokeWidth="4" />
        <circle r="23.8" fill="none" stroke="#8f1034" strokeWidth=".7" />
        <circle r="19.4" fill="none" stroke="#7e1233" strokeWidth=".8" />
        <circle r="17.6" fill="none" stroke="#d9536a" strokeWidth="2.2" strokeDasharray="1.6 1.2" />
        <path d="M0,-4 L13.5,8 H-13.5 Z M1,-8 q3,-5 7,-2 q6,-1 7,5 h-11 Z" fill="#fff" />
        <path d="M0,-3 L2.6,4 H-2.6 Z" fill="#4a0c34" />
        <circle cy="-11" r="1.7" fill="none" stroke="#f0b9bd" strokeWidth=".8" />
      </g>
      <defs>
        <linearGradient id="ring" gradientUnits="userSpaceOnUse" x1="0" y1="-24" x2="0" y2="24">
          <stop offset="0" stopColor="#fd4a42" />
          <stop offset="1" stopColor="#c80b58" />
        </linearGradient>
        <linearGradient id="disc" x1="0" y1="0" x2="0" y2="1">
          <stop offset=".1" stopColor="#ea3244" />
          <stop offset=".75" stopColor="#4d0a38" />
        </linearGradient>
      </defs>
    </MapArt>
  );
}

const navItems = [['Home', 0.45], ['Discover', 0.14], ['Tour Operator', 0.28], ['Map', 0.9], ['More', 0.6]];

const sections = [
  ['Description', 0.75, [
    ['\u00a0Experience this newly established ecopark in Polangui, Albay.', 0.85, true],
    ['Admire and capture its beauty together with your loved ones.', 1.08],
  ]],
  ['Date Established', 0.9, [['October 24, 2022', 0.63]]],
  ['Entrance Fee', 0.8, [['Daytime - Php 50', 1.05], ['Overnight/Camping - Php 150', 0.89]]],
  ['When Are We Open?', 0.56, [
    ['Monday-Thursday (6:00 am - 8:00 pm)', 0.85],
    ['Friday-Sunday (6:00 am - 10:00 pm)', 0.87],
  ]],
  ['How To Go?', 0.75, []],
];

export default function App() {
  return (
    <Page>
      <GlobalStyle />
      <TopStrip />
      <Header>
        <Logo viewBox="90 35 228 180">
          <path d="M127,120 L107,187 Q128,160 155,156 Q172,158 171,178 Q166,193 157,187 Q150,172 165,153 L210,92 Q215,125 237,152 Q262,190 285,193 Q306,192 306,180 Q300,164 275,175" />
          <path d="M162,125 Q166,113 190,117 Q215,125 237,150 M210,84 Q215,70 230,74 Q247,80 250,66 L248,57" />
        </Logo>
        <Nav>
          {navItems.map(([label, track]) => <NavLink key={label} $track={track}>{label}</NavLink>)}
        </Nav>
        <Caret />
        <HeaderIcons>
          <FaRegEnvelope size={24} />
          <FaRegBell size={24} />
        </HeaderIcons>
      </Header>
      <Main>
        <Contours viewBox="0 79 166 799">
          <ContourSet transform="scale(.40816 .33333)" lines={leftTop} index={leftTopIndex} />
          <ContourSet transform="translate(0 440) scale(.40816 .33333)" lines={leftBottom} index={leftBottomIndex} />
        </Contours>
        <Panel>
          <MapFrame>
            <ParkMap />
            <FullscreenButton aria-label="Fullscreen">
              <svg width="24" height="24" viewBox="0 0 24 24" fill="none" stroke="#666" strokeWidth="3">
                <path d="M2,8 V2 H8 M16,2 H22 V8 M22,16 V22 H16 M8,22 H2 V16" />
              </svg>
            </FullscreenButton>
          </MapFrame>
          <Details>
            <CrumbRow>
              <span>Home</span>
              <Slash>/</Slash>
              <span>Polangui</span>
              <SuggestLink>Suggest an edit</SuggestLink>
            </CrumbRow>
            <Title>JMP Adventure Park -<br />Stairways to Haven</Title>
            <Stars>
              {[1, 1, 0, 0, 0].map((on, i) => (
                <Star key={i} $on={on} viewBox="0 0 30 28">
                  <path d="M15,0 L18.8,9.4 L30,9.8 L21.6,17 L24.4,28 L15,22 L5.6,28 L8.4,17 L0,9.8 L11.2,9.4 Z" />
                </Star>
              ))}
            </Stars>
            <Badge>Private Park</Badge>
            <Sections>
              {sections.map(([title, track, lines]) => (
                <div key={title}>
                  <Heading $track={track}>{title}</Heading>
                  {lines.map(([text, t, justify]) => (
                    <Line key={text} $track={t} $justify={justify}>{text}</Line>
                  ))}
                </div>
              ))}
            </Sections>
          </Details>
        </Panel>
        <Contours viewBox="1754 79 166 799">
          <ContourSet transform="translate(1640 0) scale(.33333)" lines={rightTop} index={rightTopIndex} />
          <ContourSet transform="translate(1640 440) scale(.33333)" lines={rightBottom} index={rightBottomIndex} />
        </Contours>
      </Main>
      <BottomEdge />
      <DebugBar><SiLaravel size={27} /></DebugBar>
      <ScrollTop aria-label="Back to top"><ScrollDisc><FaArrowUp size={24} /></ScrollDisc></ScrollTop>
    </Page>
  );
}
